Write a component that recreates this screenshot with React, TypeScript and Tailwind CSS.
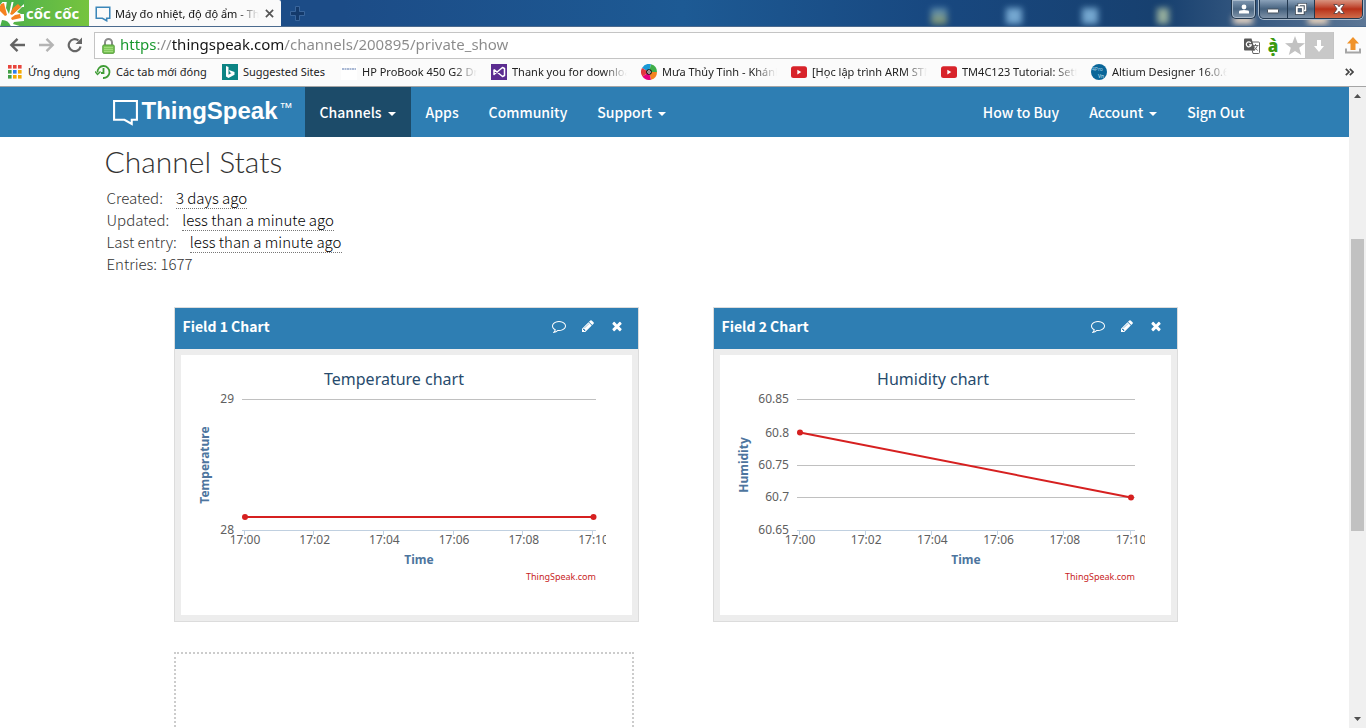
import React from "react";

const chromeFont = "font-['Noto_Sans','Open_Sans',sans-serif]";
const siteFont = "font-['Noto_Sans_CJK_SC','Noto_Sans',sans-serif]";
const plotFont = "font-['Noto_Sans','Open_Sans',sans-serif]";

/* ---------- Title bar ---------- */

function BrandLogo() {
  return (
    <button aria-label="Cốc Cốc menu" className="relative flex h-[27px] w-[89px] items-center overflow-hidden bg-linear-to-r from-[#4bb04a] to-[#76c43e]">
      <svg viewBox="0 0 24 27" className="h-[27px] w-6 shrink-0">
        <path d="M0 2h24v25H0z" fill="#fff" />
        <path d="M0 0h4L0 5z" fill="#4bb04a" />
        <path d="M1 4l3-1 3 12-2 1-5-5V6z" fill="#f58220" />
        <path d="M7 0h5L9 14l-3-6z" fill="#4bb04a" />
        <path d="M14 0h10v4L13 14l-2-1z" fill="#4bb04a" />
        <path d="M18 4l3 3-9 8-2-1 3-6z" fill="#f58220" />
        <path d="M20 14l1 4-9 2-1-2 4-3z" fill="#f58220" />
        <path d="M22 7h2v7h-3l-4-2z" fill="#56b348" />
        <path d="M24 21v6h-1l-10-3 1-2z" fill="#56b348" />
        <path d="M2 20q7 0 9 7H0z" fill="#4bb04a" />
      </svg>
      <span className="ml-0.5 font-['Open_Sans','Noto_Sans',sans-serif] text-[15px] leading-none font-bold whitespace-nowrap text-white">cốc cốc</span>
    </button>
  );
}

function BubbleMark({ className, color, thick }: { className: string; color: string; thick: number }) {
  return (
    <svg viewBox="0 0 26 26" className={className} fill="none" stroke={color} strokeWidth={thick}>
      <path d="M2 2h22v18h-5v4l-7-4H2z" />
    </svg>
  );
}

function TitleBar() {
  return (
    <div className="relative flex h-[27px] shrink-0 items-start overflow-hidden border-b border-[#4b6a8e] bg-[linear-gradient(to_right,#1c4c87,#1c4c87_25%,#1d5a94_50%,#184880_68%,#17406f_85%,#5d7796)]">
      <BrandLogo />
      <div className="flex h-[27px] w-[192px] items-center rounded-tr-xs bg-[#fafafa] pr-[7px] pl-1.5">
        <BubbleMark className="h-4 w-4 shrink-0" color="#3c87b9" thick={2.5} />
        <span className="ml-1 flex-1 overflow-hidden text-[11px] leading-5 whitespace-nowrap text-[#111] [mask-image:linear-gradient(to_right,black_85%,transparent)]">
          Máy đo nhiệt, độ độ ẩm - ThingSpeak
        </span>
        <button aria-label="Close tab" className="ml-1.5">
          <svg viewBox="0 0 10 10" className="h-[9px] w-[9px]" stroke="#555" strokeWidth="1.9">
            <path d="M1 1l8 8M9 1L1 9" />
          </svg>
        </button>
      </div>
      <button aria-label="New tab" className="mt-[6px] ml-[9px]">
        <svg viewBox="0 0 15 15" className="h-[15px] w-[15px]" fill="#143a6b" stroke="#3a669c">
          <path d="M5.500.5h4v5h5v4h-5v5h-4v-5h-5v-4h5z" />
        </svg>
      </button>
      <div className="absolute top-2 left-[931px] h-4 w-4 bg-linear-to-b from-[#6da0c8] to-[#c2c35c] opacity-70 blur-[3px]" />
      <div className="absolute top-2 left-[1006px] h-4 w-4 bg-[#8cc0e6] opacity-80 blur-[3px]" />
      <div className="absolute top-2 left-[1082px] h-4 w-4 bg-[#8cc0e6] opacity-80 blur-[3px]" />
      <div className="absolute top-2 left-[1157px] h-4 w-3 bg-[#b4c9a8] opacity-80 blur-[3px]" />
      <div className="absolute top-4 left-[1233px] h-2 w-5 bg-[#f2ddc8] blur-[3px]" />
      <div className="absolute top-4 left-[1308px] h-2 w-5 bg-[#f7dcc0] blur-[3px]" />
      <div className="relative ml-auto flex gap-[3px] pr-[3px]">
        <button aria-label="Profile" className="flex h-[19px] w-[25px] items-center justify-center rounded-b-[5px] border border-t-0 border-[#22384f] bg-linear-to-b from-[#8199b3] via-[#4c6884] to-[#7f93a8] shadow-[inset_0_0_0_1px_#a9bacb]">
          <svg viewBox="0 0 10 10" className="h-[10px] w-[10px]" fill="#fff">
            <circle cx="5" cy="3" r="2.400" />
            <path d="M0 9.500V7.500q0-1.500 5-1.500t5 1.500v2z" />
          </svg>
        </button>
        <div className="flex h-[19px] w-[104px] overflow-hidden rounded-b-[5px] border border-t-0 border-[#22384f] shadow-[0_0_0_1px_#a9bacb]">
          <button aria-label="Minimize" className="flex flex-1 items-center justify-center border-r border-[#22384f] bg-linear-to-b from-[#8ba2ba] via-[#46627f] to-[#7f93a8]">
            <svg viewBox="0 0 12 6" className="mt-1 h-[6px] w-3">
              <rect x=".5" y="1" width="11" height="4" rx=".5" fill="#fff" stroke="#46525f" />
            </svg>
          </button>
          <button aria-label="Restore" className="flex flex-1 items-center justify-center border-r border-[#22384f] bg-linear-to-b from-[#8ba2ba] via-[#46627f] to-[#7f93a8]">
            <svg viewBox="0 0 12 12" className="h-3 w-3" fill="none">
              <path d="M4 3V1.500h6.500v6H9" stroke="#46525f" strokeWidth="3" />
              <rect x="1.500" y="4" width="6.500" height="6.500" stroke="#46525f" strokeWidth="3.500" />
              <path d="M4 3V1.500h6.500v6H9" stroke="#fff" strokeWidth="1.500" />
              <rect x="1.800" y="4.200" width="6" height="6" stroke="#fff" strokeWidth="1.800" />
            </svg>
          </button>
          <button aria-label="Close window" className="flex w-[47px] items-center justify-center bg-linear-to-b from-[#d8937f] via-[#b83018] to-[#cf6b4a]">
            <svg viewBox="0 0 12 10" className="h-[10px] w-3" fill="#fff" stroke="#4c3a3d" strokeWidth=".8">
              <path d="M.8.5h3.400L6 2.800 7.800.500h3.400L7.900 5l3.300 4.500H7.800L6 7.200 4.200 9.500H.800L4.100 5z" />
            </svg>
          </button>
        </div>
      </div>
    </div>
  );
}

/* ---------- Toolbar ---------- */

function Toolbar() {
  return (
    <div className="flex h-8 shrink-0 items-end bg-[#fbfbfb] pl-[9px]">
      <div className="flex h-[27px] w-[85px] items-center gap-3 pb-0.5">
        <button aria-label="Back">
          <svg viewBox="0 0 17 16" className="h-4 w-[17px]" fill="none" stroke="#646464" strokeWidth="2.400">
            <path d="M16 8H3M8.500 1.800L2.300 8l6.200 6.200" />
          </svg>
        </button>
        <button aria-label="Forward">
          <svg viewBox="0 0 17 16" className="h-4 w-[17px]" fill="none" stroke="#b4b4b4" strokeWidth="2.400">
            <path d="M1 8h13M8.500 1.800L14.700 8l-6.200 6.200" />
          </svg>
        </button>
        <button aria-label="Reload">
          <svg viewBox="0 0 16 16" className="h-4 w-4" fill="none" stroke="#666" strokeWidth="2.200">
            <path d="M13.600 9.500A6 6 0 1 1 11.500 3.500" />
            <path d="M15 .5v6.500H8.500z" fill="#666" stroke="none" />
          </svg>
        </button>
      </div>
      <div className="flex h-[27px] min-w-0 flex-1 items-center border border-[#c4c4c4] bg-white pl-[7px]">
        <svg viewBox="0 0 13 16" className="h-4 w-[13px] shrink-0">
          <path d="M3 8V4.500a3.500 3.500 0 0 1 7 0V8" fill="none" stroke="#8c8c8c" strokeWidth="2" />
          <rect x=".8" y="7" width="11.400" height="8.300" rx="1" fill="#80c95b" stroke="#4f9a35" />
          <path d="M2 9.500h9M2 11.500h9M2 13.500h9" stroke="#a8df85" strokeWidth=".8" />
        </svg>
        <input
          aria-label="Address"
          readOnly
          value="https://thingspeak.com/channels/200895/private_show"
          className="ml-[5px] h-6 min-w-0 flex-1 bg-[linear-gradient(to_right,#14962a_0_36px,#8a8a8a_36px_52px,#151515_52px_164px,#8a8a8a_164px)] bg-clip-text pb-[3px] text-[15px] leading-5 text-transparent outline-none"
        />
        <div className="flex h-full shrink-0 items-center">
          <button aria-label="Translate">
            <svg viewBox="0 0 16 16" className="h-4 w-4">
              <path d="M6 4h8.500q1 0 1 1v9.500q0 1-1 1H9z" fill="#fff" stroke="#666" />
              <path d="M8.500 7.500h6M11.500 6v1.500M13.500 7.500q-1 3.500-4 5M9.800 8q1.500 3 4 4.500" fill="none" stroke="#666" strokeWidth=".9" />
              <path d="M0 1.500Q0 .5 1 .5h6.500l3.500 12H1q-1 0-1-1z" fill="#585858" />
              <path d="M6.800 4.800A2.500 2.500 0 1 0 7.300 6.800H5" fill="none" stroke="#fff" strokeWidth="1.200" />
            </svg>
          </button>
          <button aria-label="Vietnamese input" className="ml-[7px] w-3 text-center font-['Open_Sans','Noto_Sans',sans-serif] text-[17px] leading-5 font-extrabold text-[#3c9a10]">ạ̀</button>
          <button aria-label="Bookmark" className="ml-1.5">
            <svg viewBox="0 0 20 19" className="h-[19px] w-5" fill="#c2c2c2">
              <path d="M10 0l2.600 6.900 7.400.3-5.800 4.600 2 7.200L10 14.900 3.800 19l2-7.200L0 7.200l7.400-.3z" />
            </svg>
          </button>
          <button aria-label="Downloads" className="flex h-[27px] w-7 items-center justify-center bg-[#c8c8c8]">
            <svg viewBox="0 0 10 12" className="h-3 w-[10px]" fill="#fff">
              <path d="M3 0h4v6h3l-5 6-5-6h3z" />
            </svg>
          </button>
        </div>
      </div>
      <button aria-label="Upload" className="mr-0.5 ml-2 flex h-[27px] w-[22px] items-center justify-center">
        <svg viewBox="0 0 16 17" className="h-[17px] w-4">
          <path d="M8 0l6 6.500h-3.500V13h-5V6.500H2z" fill="#f0932b" />
          <path d="M1 11.500v4h14v-4" fill="none" stroke="#a5a5a5" strokeWidth="2" />
        </svg>
      </button>
    </div>
  );
}

/* ---------- Bookmarks ---------- */

const AppsIcon = () => (
  <svg viewBox="0 0 14 14" className="mr-px h-3.5 w-3.5">
    {["#e8453c", "#e8453c", "#e8453c", "#43a047", "#2d7ff0", "#f4a900", "#43a047", "#f4a900", "#f4a900"].map((c, i) => (
      <rect key={i} x={(i % 3) * 5} y={Math.floor(i / 3) * 5} width="3.600" height="3.600" fill={c} />
    ))}
  </svg>
);
const ClockIcon = () => (
  <svg viewBox="0 0 16 16" className="h-4 w-4" fill="none" stroke="#3f9c35" strokeWidth="1.800">
    <path d="M2.500 8.500A6 6 0 1 1 8 14M8.500 4v5H6" />
    <path d="M0 7.500l2.500 3 3-3" strokeWidth="1.300" />
  </svg>
);
const BingIcon = () => (
  <svg viewBox="0 0 16 16" className="h-4 w-4">
    <path d="M0 0h16v16H0z" fill="#0c8484" />
    <path d="M4 2l2.500 1v7.800l3-1.700-1.500-.7-1-2.400 5.500 2v2.800L6.500 14 4 12.500z" fill="#fff" />
  </svg>
);
const PageIcon = () => (
  <svg viewBox="0 0 16 16" className="h-4 w-4">
    <path d="M0 0h16v16H0z" fill="#fff" />
    <path d="M1 5h14" stroke="#a9b8d4" strokeWidth="2" strokeDasharray="2 .5" />
  </svg>
);
const StudioIcon = () => (
  <svg viewBox="0 0 16 16" className="h-4 w-4">
    <path d="M0 0h16v16H0z" fill="#5c2d91" />
    <path d="M3 5.500v5l8.500-7 2 1v7l-2 1-8.500-7" fill="none" stroke="#fff" strokeWidth="1.500" strokeLinejoin="round" />
  </svg>
);
const DiscIcon = () => (
  <svg viewBox="0 0 16 16" className="h-4 w-4">
    <path d="M8 8L1 4A8 8 0 0 1 10 .3z" fill="#1b9ad6" />
    <path d="M8 8L10 .3A8 8 0 0 1 16 8z" fill="#3fae49" />
    <path d="M8 8h8a8 8 0 0 1-6 7.700z" fill="#f58220" />
    <path d="M8 8l2 7.700A8 8 0 0 1 1.500 12.500z" fill="#e6007e" />
    <path d="M8 8l-6.500 4.500A8 8 0 0 1 1 4z" fill="#e2383f" />
    <circle cx="8" cy="8" r="2.800" fill="#111" />
    <circle cx="8" cy="8" r="1.700" fill="#fff" />
    <circle cx="8" cy="8" r=".8" fill="#111" />
  </svg>
);
const VideoIcon = () => (
  <svg viewBox="0 0 16 16" className="h-4 w-4">
    <rect y="2.300" width="16" height="11.700" rx="2.500" fill="#d8232a" />
    <path d="M6.300 5.800v4.600L10.300 8z" fill="#fff" />
  </svg>
);
const RoundIcon = () => (
  <svg viewBox="0 0 16 16" className="h-4 w-4">
    <circle cx="8" cy="8" r="8" fill="#0a6699" />
    <text x="1" y="7" fontSize="5" fill="#a9d2e8">4Pro</text>
    <text x="7" y="14" fontSize="5" fill="#d5e9f3">Vn</text>
  </svg>
);

const bookmarks = [
  { label: "Ứng dụng", Icon: AppsIcon, width: "w-[53px]" },
  { label: "Các tab mới đóng", Icon: ClockIcon, width: "w-[92px]" },
  { label: "Suggested Sites", Icon: BingIcon, width: "w-[84px]" },
  { label: "HP ProBook 450 G2 Drivers", Icon: PageIcon, width: "w-[115px]", fade: true },
  { label: "Thank you for downloading", Icon: StudioIcon, width: "w-[115px]", fade: true },
  { label: "Mưa Thủy Tinh - Khánh Phương", Icon: DiscIcon, width: "w-[115px]", fade: true },
  { label: "[Học lập trình ARM STM32]", Icon: VideoIcon, width: "w-[115px]", fade: true },
  { label: "TM4C123 Tutorial: Setting up", Icon: VideoIcon, width: "w-[115px]", fade: true },
  { label: "Altium Designer 16.0.6 Full", Icon: RoundIcon, width: "w-[115px]", fade: true },
];

function BookmarksBar() {
  return (
    <div className="flex h-7 shrink-0 items-center gap-3.5 border-b border-[#a5a5a5] bg-[#fbfbfb] pr-3 pb-0.5 pl-2">
      {bookmarks.map(({ label, Icon, width, fade }) => (
        <a key={label} href="#" className="flex items-center gap-[5px] text-[11px] leading-5 text-[#222]">
          <Icon />
          <span className={`${width} overflow-hidden whitespace-nowrap ${fade ? "[mask-image:linear-gradient(to_right,black_80%,transparent)]" : ""}`}>{label}</span>
        </a>
      ))}
      <button aria-label="More bookmarks" className="ml-auto">
        <svg viewBox="0 0 9 8" className="h-2 w-[9px]" fill="none" stroke="#444" strokeWidth="1.700">
          <path d="M.8.8L4 4 .8 7.200M4.800.8L8 4 4.800 7.200" />
        </svg>
      </button>
    </div>
  );
}

/* ---------- Site navigation ---------- */

function NavItem({ label, caret, active }: { label: string; caret?: boolean; active?: boolean }) {
  return (
    <a href="#" className={`flex h-[50px] items-center px-[15px] text-[14px] leading-5 font-medium whitespace-nowrap text-white ${active ? "bg-[#1c4b69]" : ""}`}>
      {label}
      {caret && (
        <svg viewBox="0 0 8 4" className="mt-[3px] ml-1.5 h-1 w-2" fill="#fff">
          <path d="M0 0h8L4 4z" />
        </svg>
      )}
    </a>
  );
}

function SiteNav() {
  return (
    <nav className="bg-[#2e7eb3]">
      <div className="mx-auto flex h-[50px] max-w-[1170px] items-center pl-[15px]">
        <a href="#" className="flex w-[200px] shrink-0 items-center pl-[7px] text-white">
          <BubbleMark className="h-[27px] w-[27px]" color="#fff" thick={2} />
          <span className="mb-0.5 ml-[3px] font-['Liberation_Sans',sans-serif] text-[24px] leading-8 font-bold">ThingSpeak</span>
          <span className="mb-2 ml-0.5 font-['Liberation_Sans',sans-serif] text-[13px] leading-4">™</span>
        </a>
        <NavItem label="Channels" caret active />
        <NavItem label="Apps" />
        <NavItem label="Community" />
        <NavItem label="Support" caret />
        <div className="ml-auto flex">
          <NavItem label="How to Buy" />
          <NavItem label="Account" caret />
          <NavItem label="Sign Out" />
        </div>
      </div>
    </nav>
  );
}

/* ---------- Channel stats ---------- */

const stats = [
  { label: "Created:", time: "3 days ago" },
  { label: "Updated:", time: "less than a minute ago" },
  { label: "Last entry:", time: "less than a minute ago" },
];

function Stats() {
  return (
    <section className="text-[#333]">
      <h1 className="pt-1.5 font-['Lato',sans-serif] text-[30px] leading-9 font-light">Channel Stats</h1>
      <div className="pt-2 pl-0.5 text-[15px] leading-[22px] font-light">
        {stats.map((s) => (
          <p key={s.label} className="flex h-[22px] gap-[13px]">
            {s.label}
            <time className="h-[22px] border-b border-dotted border-[#777] text-black">{s.time}</time>
          </p>
        ))}
        <p>Entries: 1677</p>
      </div>
    </section>
  );
}

/* ---------- Charts ---------- */

type ChartData = {
  field: string;
  title: string;
  yTitle: string;
  left: number;
  first: number;
  last: number;
  yTicks: { label: string; y: number }[];
  points: [number, number];
};

const charts: ChartData[] = [
  {
    field: "Field 1 Chart",
    title: "Temperature chart",
    yTitle: "Temperature",
    left: 61,
    first: 64,
    last: 412.5,
    yTicks: [
      { label: "29", y: 44.5 },
      { label: "28", y: 175.5 },
    ],
    points: [162, 162],
  },
  {
    field: "Field 2 Chart",
    title: "Humidity chart",
    yTitle: "Humidity",
    left: 77,
    first: 80,
    last: 411,
    yTicks: [
      { label: "60.85", y: 44.5 },
      { label: "60.8", y: 78.5 },
      { label: "60.75", y: 110.5 },
      { label: "60.7", y: 142.5 },
      { label: "60.65", y: 175.5 },
    ],
    points: [77.5, 142.5],
  },
];

const times = ["17:00", "17:02", "17:04", "17:06", "17:08", "17:10"];

function LineChart({ c }: { c: ChartData }) {
  const step = (c.last - c.first) / 5;
  return (
    <svg viewBox="0 0 425 260" className={`block h-[260px] w-[425px] overflow-hidden ${plotFont}`} role="img" aria-label={c.title}>
      <text x="213" y="30" textAnchor="middle" fontSize="16" fill="#274b6d">{c.title}</text>
      {c.yTicks.map((t, i) => (
        <g key={t.label}>
          <path d={`M${c.left} ${t.y}H415`} stroke={i === c.yTicks.length - 1 ? "#c0d0e0" : "#c0c0c0"} />
          <text x={c.left - 8} y={Math.floor(t.y) + 4} textAnchor="end" fontSize="12" fill="#606060">{t.label}</text>
        </g>
      ))}
      {times.map((t, i) => (
        <g key={t}>
          <path d={`M${Math.floor(c.first + i * step) - 0.5} 175v5`} stroke="#c0d0e0" />
          <text x={c.first + i * step} y="189" textAnchor="middle" fontSize="12" fill="#606060">{t}</text>
        </g>
      ))}
      <text x={(c.left + 415) / 2} y="209" textAnchor="middle" fontSize="12" fontWeight="bold" fill="#4d759e">Time</text>
      <text transform="translate(28 110) rotate(-90)" textAnchor="middle" fontSize="12" fontWeight="bold" fill="#4d759e">{c.yTitle}</text>
      <path d={`M${c.first} ${c.points[0]}L${c.last} ${c.points[1]}`} stroke="#d62020" strokeWidth="2" />
      <circle cx={c.first} cy={c.points[0]} r="3" fill="#d62020" />
      <circle cx={c.last} cy={c.points[1]} r="3" fill="#d62020" />
      <text x="415" y="225" textAnchor="end" fontSize="9" fill="#c81e1e">ThingSpeak.com</text>
    </svg>
  );
}

const headerIcons = [
  {
    name: "Comment",
    d: "M896 384q-204 0-381.500 69.500t-282 187.500-104.500 255q0 112 71.500 213.500t201.500 175.500l87 50-27 96q-24 91-70 172 152-63 275-171l43-38 57 6q69 8 130 8 204 0 381.500-69.500t282-187.500 104.500-255-104.500-255-282-187.500-381.500-69.500zm896 512q0 174-120 321.500t-326 233-450 85.500q-70 0-145-8-198 175-460 242-49 14-114 22h-5q-15 0-27-10.500t-16-27.500v-1q-3-4-.5-12t2-10 4.500-9.500l6-9 7-8.500 8-9q7-8 31-34.500t34.500-38 31-39.500 32.500-51 27-59 26-76q-157-89-247.500-220t-90.500-281q0-174 120-321.500t326-233 450-85.500 450 85.500 326 233 120 321.500z",
  },
  {
    name: "Edit",
    d: "M491 1536l91-91-235-235-91 91v107h128v128h107zm523-928q0-22-22-22-10 0-17 7l-542 542q-7 7-7 17 0 22 22 22 10 0 17-7l542-542q7-7 7-17zm-54-192l416 416-832 832h-416v-416zm683 96q0 53-37 90l-166 166-416-416 166-165q36-38 90-38 53 0 91 38l235 234q37 39 37 91z",
  },
  {
    name: "Remove",
    d: "M1490 1322q0 40-28 68l-136 136q-28 28-68 28t-68-28l-294-294-294 294q-28 28-68 28t-68-28l-136-136q-28-28-28-68t28-68l294-294-294-294q-28-28-28-68t28-68l136-136q28-28 68-28t68 28l294 294 294-294q28-28 68-28t68 28l136 136q28 28 28 68t-28 68l-294 294 294 294q28 28 28 68z",
  },
];

function ChartCard({ c }: { c: ChartData }) {
  return (
    <section className="border border-[#dcdcdc] bg-[#ededed]">
      <header className="flex h-[41px] items-start bg-[#2e7eb3] pt-2 pr-3.5 pl-2 text-white">
        <h2 className="text-[14px] leading-5 font-bold">{c.field}</h2>
        <div className="ml-auto flex h-5 items-center gap-[15px]">
          {headerIcons.map((icon) => (
            <button key={icon.name} aria-label={icon.name}>
              <svg viewBox="0 0 1792 1792" className="h-3.5 w-3.5" fill="#fff">
                <path d={icon.d} />
              </svg>
            </button>
          ))}
        </div>
      </header>
      <div className="p-1.5">
        <div className="overflow-hidden bg-white">
          <LineChart c={c} />
        </div>
      </div>
    </section>
  );
}

/* ---------- Scrollbar ---------- */

function Scrollbar() {
  return (
    <div className="flex w-[17px] shrink-0 flex-col items-center bg-[#f0f0f0] py-[7px]" aria-hidden="true">
      <svg viewBox="0 0 7 4" className="h-1 w-[7px]" fill="#505050">
        <path d="M3.500 0L7 4H0z" />
      </svg>
      <div className="flex w-full grow flex-col items-center py-1.5">
        <div className="grow-[135]" />
        <div className="w-[13px] grow-[291] bg-[#c1c1c1]" />
        <div className="grow-[179]" />
      </div>
      <svg viewBox="0 0 7 4" className="h-1 w-[7px]" fill="#505050">
        <path d="M3.500 4L0 0h7z" />
      </svg>
    </div>
  );
}

export default function App() {
  return (
    <div className={`flex h-screen flex-col overflow-hidden bg-white ${chromeFont}`}>
      <TitleBar />
      <Toolbar />
      <BookmarksBar />
      <div className="flex min-h-0 flex-1">
        <div className={`min-w-0 flex-1 overflow-hidden ${siteFont}`}>
          <SiteNav />
          <main className="mx-auto max-w-[1170px] px-[15px]">
            <Stats />
            <div className="grid grid-cols-2 gap-x-[74px] gap-y-[30px] pt-8 pr-[67px] pl-[69px]">
              {charts.map((c) => (
                <ChartCard key={c.field} c={c} />
              ))}
              <div className="mr-[5px] h-[315px] border-2 border-dotted border-[#ccc]" />
            </div>
          </main>
        </div>
        <Scrollbar />
      </div>
    </div>
  );
}
